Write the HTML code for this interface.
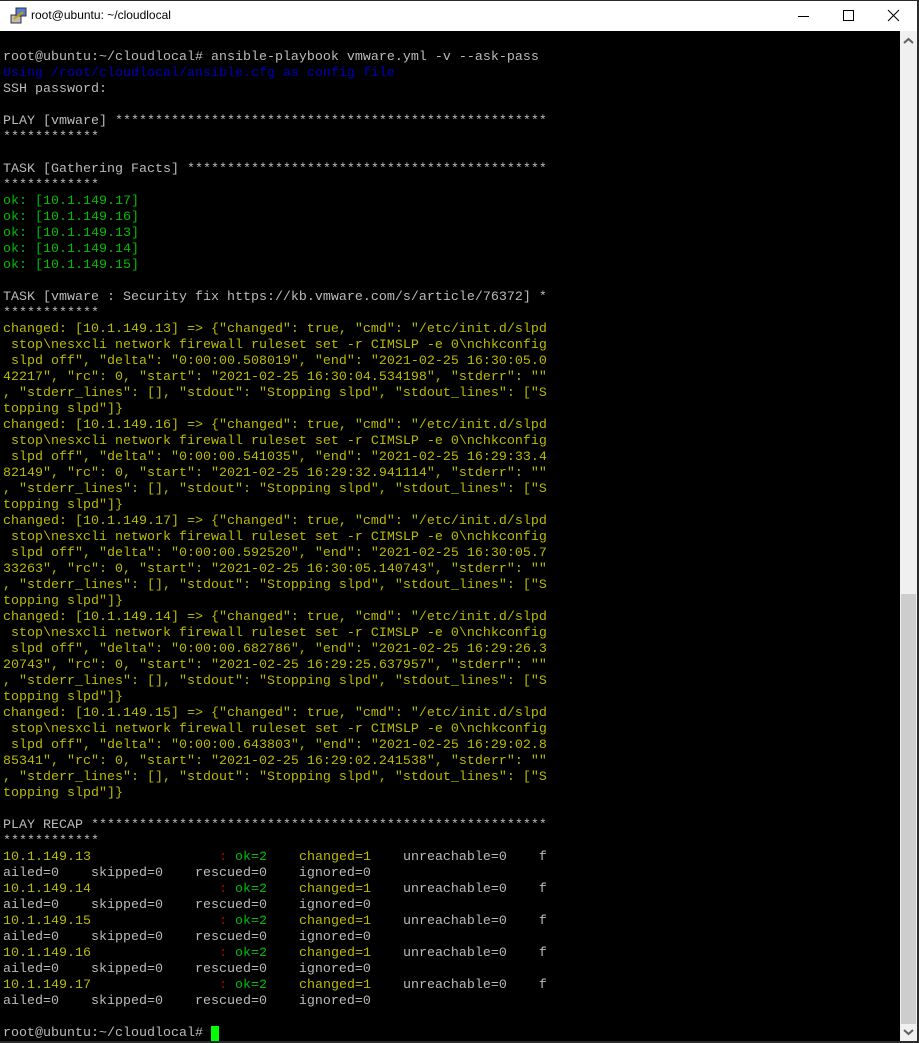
<!DOCTYPE html>
<html><head><meta charset="utf-8"><style>
html,body{margin:0;padding:0;width:919px;height:1043px;overflow:hidden;background:#2b2b2b;}
#tb{position:absolute;left:0;top:1px;width:917px;height:30px;background:#fff;}
#tb .t{position:absolute;left:31px;top:7px;font:12px "Liberation Sans",sans-serif;color:#000;}
#term{position:absolute;left:0;top:31px;width:900px;height:1010px;background:#000;overflow:hidden;}
pre{margin:0;position:absolute;left:3px;top:3px;font-family:"Liberation Mono",monospace;font-size:13.33px;line-height:16px;color:#bbb;white-space:pre;}
.b{color:#0000bb}.g{color:#00bb00}.y{color:#bbbb00}.r{color:#bb0000}
.cur{background:#00ff00;color:#00ff00}
#sb{position:absolute;left:900px;top:31px;width:17px;height:1010px;background:#f0f0f0;}
#th{position:absolute;left:901px;top:594px;width:15px;height:430px;background:#cdcdcd;}
</style></head><body>
<div id="tb">
<svg style="position:absolute;left:10px;top:6px" width="18" height="18" viewBox="0 0 18 18"><rect x="1" y="8" width="10" height="8" fill="#bbb" stroke="#333"/><rect x="6" y="1" width="10" height="8" fill="#5a7bd0" stroke="#333"/><path d="M4 12 L13 5" stroke="#c8a000" stroke-width="2"/></svg>
<span class="t">root@ubuntu: ~/cloudlocal</span>
<svg style="position:absolute;left:795px;top:8px" width="16" height="16"><path d="M3 7.5H14" stroke="#000"/></svg>
<svg style="position:absolute;left:842px;top:8px" width="16" height="16"><rect x="1.5" y="1.5" width="10" height="10" fill="none" stroke="#000"/></svg>
<svg style="position:absolute;left:887px;top:8px" width="16" height="16"><path d="M1 1L12 12M12 1L1 12" stroke="#000"/></svg>
</div>
<div id="term"><pre>

root@ubuntu:~/cloudlocal# ansible-playbook vmware.yml -v --ask-pass
<span class="b">Using /root/cloudlocal/ansible.cfg as config file</span>
SSH password:

PLAY [vmware] ******************************************************
************

TASK [Gathering Facts] *********************************************
************
<span class="g">ok: [10.1.149.17]
ok: [10.1.149.16]
ok: [10.1.149.13]
ok: [10.1.149.14]
ok: [10.1.149.15]</span>

TASK [vmware : Security fix https://kb.vmware.com/s/article/76372] *
************
<span class="y">changed: [10.1.149.13] =&gt; {"changed": true, "cmd": "/etc/init.d/slpd
 stop\nesxcli network firewall ruleset set -r CIMSLP -e 0\nchkconfig
 slpd off", "delta": "0:00:00.508019", "end": "2021-02-25 16:30:05.0
42217", "rc": 0, "start": "2021-02-25 16:30:04.534198", "stderr": ""
, "stderr_lines": [], "stdout": "Stopping slpd", "stdout_lines": ["S
topping slpd"]}
changed: [10.1.149.16] =&gt; {"changed": true, "cmd": "/etc/init.d/slpd
 stop\nesxcli network firewall ruleset set -r CIMSLP -e 0\nchkconfig
 slpd off", "delta": "0:00:00.541035", "end": "2021-02-25 16:29:33.4
82149", "rc": 0, "start": "2021-02-25 16:29:32.941114", "stderr": ""
, "stderr_lines": [], "stdout": "Stopping slpd", "stdout_lines": ["S
topping slpd"]}
changed: [10.1.149.17] =&gt; {"changed": true, "cmd": "/etc/init.d/slpd
 stop\nesxcli network firewall ruleset set -r CIMSLP -e 0\nchkconfig
 slpd off", "delta": "0:00:00.592520", "end": "2021-02-25 16:30:05.7
33263", "rc": 0, "start": "2021-02-25 16:30:05.140743", "stderr": ""
, "stderr_lines": [], "stdout": "Stopping slpd", "stdout_lines": ["S
topping slpd"]}
changed: [10.1.149.14] =&gt; {"changed": true, "cmd": "/etc/init.d/slpd
 stop\nesxcli network firewall ruleset set -r CIMSLP -e 0\nchkconfig
 slpd off", "delta": "0:00:00.682786", "end": "2021-02-25 16:29:26.3
20743", "rc": 0, "start": "2021-02-25 16:29:25.637957", "stderr": ""
, "stderr_lines": [], "stdout": "Stopping slpd", "stdout_lines": ["S
topping slpd"]}
changed: [10.1.149.15] =&gt; {"changed": true, "cmd": "/etc/init.d/slpd
 stop\nesxcli network firewall ruleset set -r CIMSLP -e 0\nchkconfig
 slpd off", "delta": "0:00:00.643803", "end": "2021-02-25 16:29:02.8
85341", "rc": 0, "start": "2021-02-25 16:29:02.241538", "stderr": ""
, "stderr_lines": [], "stdout": "Stopping slpd", "stdout_lines": ["S
topping slpd"]}</span>

PLAY RECAP *********************************************************
************
<span class="y">10.1.149.13</span>                <span class="r">:</span> <span class="g">ok=2</span>    <span class="y">changed=1</span>    unreachable=0    f
ailed=0    skipped=0    rescued=0    ignored=0
<span class="y">10.1.149.14</span>                <span class="r">:</span> <span class="g">ok=2</span>    <span class="y">changed=1</span>    unreachable=0    f
ailed=0    skipped=0    rescued=0    ignored=0
<span class="y">10.1.149.15</span>                <span class="r">:</span> <span class="g">ok=2</span>    <span class="y">changed=1</span>    unreachable=0    f
ailed=0    skipped=0    rescued=0    ignored=0
<span class="y">10.1.149.16</span>                <span class="r">:</span> <span class="g">ok=2</span>    <span class="y">changed=1</span>    unreachable=0    f
ailed=0    skipped=0    rescued=0    ignored=0
<span class="y">10.1.149.17</span>                <span class="r">:</span> <span class="g">ok=2</span>    <span class="y">changed=1</span>    unreachable=0    f
ailed=0    skipped=0    rescued=0    ignored=0

root@ubuntu:~/cloudlocal# <span class="cur">_</span></pre></div>
<div id="sb"></div><div id="th"></div>
<svg style="position:absolute;left:903px;top:37px" width="11" height="8"><path d="M1 6L5.5 2L10 6" stroke="#606060" stroke-width="2" fill="none"/></svg>
<svg style="position:absolute;left:903px;top:1028px" width="11" height="8"><path d="M1 2L5.5 6L10 2" stroke="#606060" stroke-width="2" fill="none"/></svg>
</body></html>
